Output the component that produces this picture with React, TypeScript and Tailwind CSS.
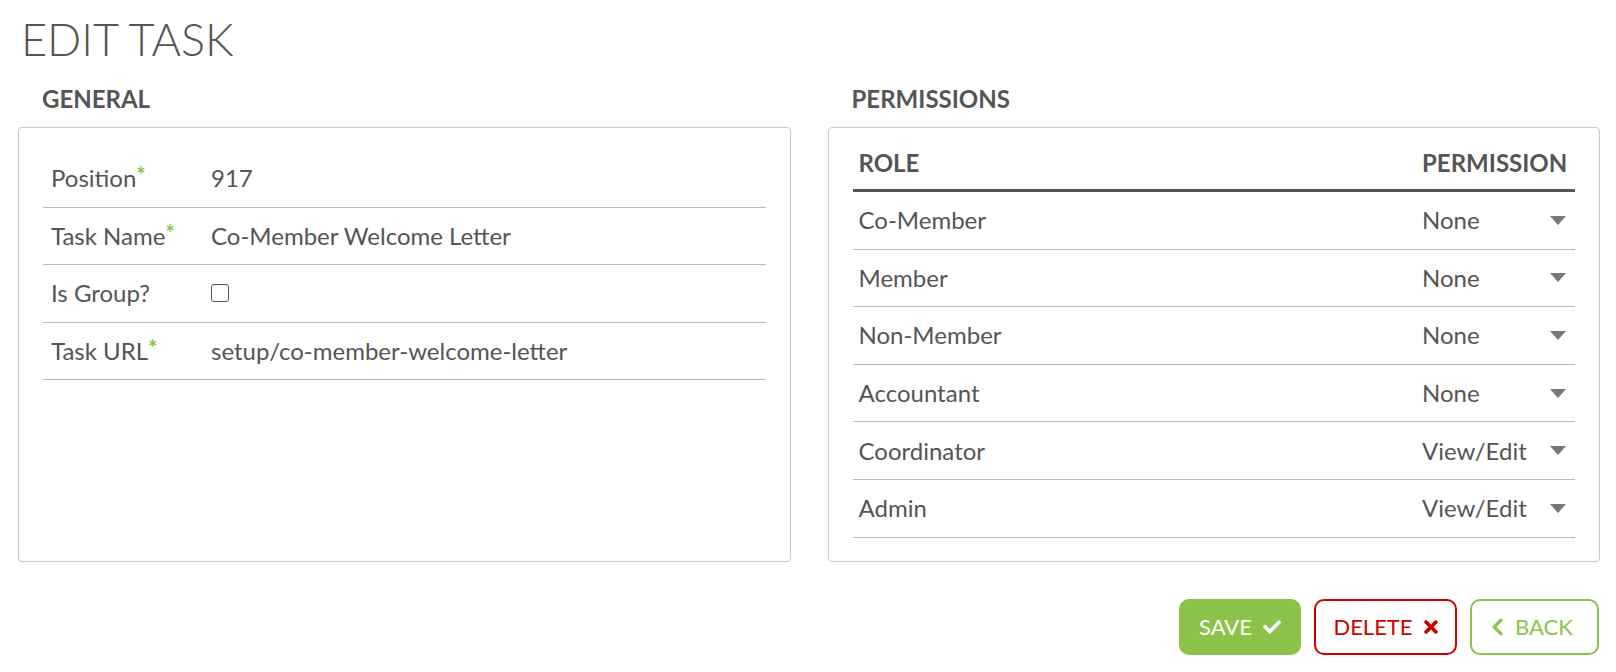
import React from 'react';
import { FaCheck, FaTimes, FaChevronLeft } from 'react-icons/fa';

type Field = { label: string; required: boolean; value?: string; checkbox?: boolean };

const fields: Field[] = [
  { label: 'Position', required: true, value: '917' },
  { label: 'Task Name', required: true, value: 'Co-Member Welcome Letter' },
  { label: 'Is Group?', required: false, checkbox: true },
  { label: 'Task URL', required: true, value: 'setup/co-member-welcome-letter' },
];

const permissions: [string, string][] = [
  ['Co-Member', 'None'],
  ['Member', 'None'],
  ['Non-Member', 'None'],
  ['Accountant', 'None'],
  ['Coordinator', 'View/Edit'],
  ['Admin', 'View/Edit'],
];

const Arrow = () => (
  <svg width="16" height="9" viewBox="0 0 16 9" className="shrink-0">
    <path d="M0 0 H16 L8 9 Z" fill="#777" />
  </svg>
);

const App: React.FC = () => {
  return (
    <div className="min-h-screen bg-white pl-[18px] pr-[16px] font-['Lato',sans-serif] text-[#555]">
      <h1 className="pt-[17px] pl-[3px] text-[45px] font-light leading-none">EDIT TASK</h1>

      <div className="mt-[24px] grid grid-cols-2 gap-x-[37px]">
        {/* general */}
        <section className="flex flex-col">
          <h2 className="pl-[24px] text-[24px] font-bold leading-[26px]">GENERAL</h2>
          <div className="mt-[15px] flex-1 rounded-[4px] border border-[#c8c8c8] px-[24px] pt-[22px] pb-[24px]">
            {fields.map((f) => (
              <div
                key={f.label}
                className="flex h-[57.6px] items-center border-b border-[#bbb] text-[24px] leading-[26px]"
              >
                <div className="w-[160px] shrink-0 pl-[8px]">
                  {f.label}
                  {f.required && (
                    <sup className="top-[-4px] text-[22px] font-bold text-[#8bc34a]">*</sup>
                  )}
                </div>
                <div className="pl-[8px]">
                  {f.checkbox ? (
                    <span className="block h-[18px] w-[18px] rounded-[3px] border border-[#555] bg-white" />
                  ) : (
                    f.value
                  )}
                </div>
              </div>
            ))}
          </div>
        </section>

        {/* permissions */}
        <section className="flex flex-col">
          <h2 className="pl-[24px] text-[24px] font-bold leading-[26px]">PERMISSIONS</h2>
          <div className="mt-[15px] flex-1 rounded-[4px] border border-[#c8c8c8] px-[24px] pt-[22px] pb-[23px]">
            <div className="grid grid-cols-[1fr_161px] border-b-[3px] border-[#555] pb-[13px] text-[24px] font-bold leading-[26px]">
              <div className="pl-[6px]">ROLE</div>
              <div className="pl-[8px]">PERMISSION</div>
            </div>
            {permissions.map(([role, perm]) => (
              <div
                key={role}
                className="grid h-[57.6px] grid-cols-[1fr_161px] items-center border-b border-[#bbb] text-[24px] leading-[26px]"
              >
                <div className="pl-[6px]">{role}</div>
                <div className="flex items-center justify-between pl-[8px] pr-[9px]">
                  <span>{perm}</span>
                  <Arrow />
                </div>
              </div>
            ))}
          </div>
        </section>
      </div>

      <div className="mt-[37px] flex justify-end gap-[13px] pr-px">
        <button className="flex h-[56px] w-[122px] items-center justify-center gap-[11px] rounded-[10px] border-2 border-[#8bc34a] bg-[#8bc34a] text-[22px] uppercase text-white">
          Save <FaCheck className="h-[18px] w-[18px]" />
        </button>
        <button className="flex h-[56px] w-[143px] items-center justify-center gap-[11px] rounded-[10px] border-2 border-[#c00] bg-white text-[22px] uppercase text-[#c00]">
          Delete <FaTimes className="h-[20px] w-[14px]" />
        </button>
        <button className="flex h-[56px] w-[129px] items-center gap-[11px] rounded-[10px] border-2 border-[#8bc34a] bg-white pl-[19px] text-[22px] uppercase text-[#8bc34a]">
          <FaChevronLeft className="h-[20px] w-[13px]" /> Back
        </button>
      </div>
    </div>
  );
};

export default App;
